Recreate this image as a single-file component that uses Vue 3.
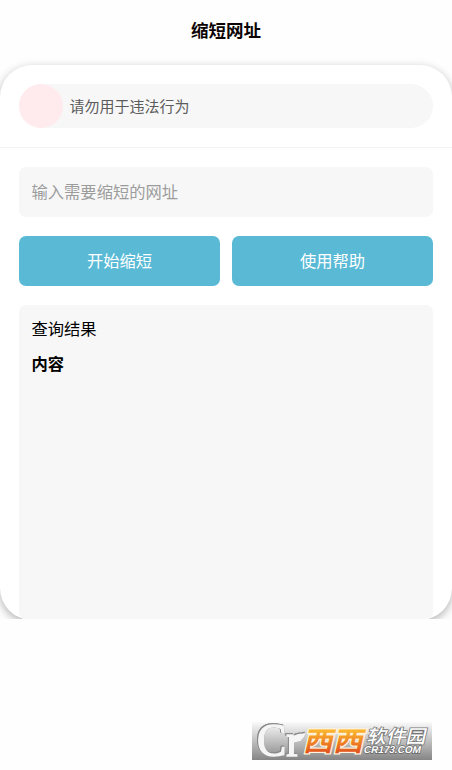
<script setup>
import { ref } from 'vue'

const url = ref('')
const actions = ['开始缩短', '使用帮助']
</script>

<template>
  <div class="page">
    <header class="title">缩短网址</header>

    <div class="stage">
      <main class="card">
        <section class="notice-wrap">
          <div class="notice">
            <span class="dot"></span>
            <span class="notice-text">请勿用于违法行为</span>
          </div>
        </section>
        <section class="content">
          <input v-model="url" class="field" type="text" placeholder="输入需要缩短的网址" />
          <div class="actions">
            <button v-for="a in actions" :key="a" class="btn" type="button">{{ a }}</button>
          </div>
          <div class="result">
            <div class="line">查询结果</div>
            <div class="line strong">内容</div>
          </div>
        </section>
      </main>
    </div>

    <footer class="foot">
      <svg class="logo" width="180" height="38" viewBox="0 0 180 38">
        <defs>
          <linearGradient id="bar" x1="0" y1="0" x2="0" y2="1">
            <stop offset="0" stop-color="#fafafa" />
            <stop offset="0.5" stop-color="#c0c0c0" />
            <stop offset="1" stop-color="#858585" />
          </linearGradient>
          <linearGradient id="orange" x1="0" y1="0" x2="0" y2="1">
            <stop offset="0.3" stop-color="#fbb42c" />
            <stop offset="0.85" stop-color="#e2521c" />
          </linearGradient>
        </defs>
        <rect width="180" height="38" fill="url(#bar)" />
        <g class="mark">
          <text x="5" y="33.5" font-size="46" textLength="44" lengthAdjust="spacingAndGlyphs">Cr</text>
          <path class="leaf" d="M39 19C39 12 46 13.500 53.500 11C52.500 17 46 21.500 40 20Z" />
        </g>
        <g transform="skewX(-13)">
          <text class="orange" x="57.500" y="28.800" font-size="27" textLength="60" lengthAdjust="spacingAndGlyphs">西西</text>
          <text class="soft" x="119" y="20.500" font-size="18.500" textLength="59" lengthAdjust="spacingAndGlyphs">软件园</text>
          <text class="domain" x="118.500" y="31.300" font-size="10" textLength="57" lengthAdjust="spacingAndGlyphs">CR173.COM</text>
        </g>
      </svg>
    </footer>
  </div>
</template>

<style>
body {
  margin: 0;
  background: #fff;
}
</style>

<style scoped>
.page {
  width: 100%;
  height: 770px;
  display: flex;
  flex-direction: column;
  overflow: hidden;
  background: #fefefe;
  font-family: "Noto Sans CJK SC", sans-serif;
  color: #000;
}
.title {
  height: 50px;
  padding-top: 5px;
  box-sizing: border-box;
  line-height: 50px;
  text-align: center;
  font-size: 17.5px;
  font-weight: 700;
  color: #0c0303;
}
.stage {
  height: 569px;
  padding-top: 15px;
  box-sizing: border-box;
  overflow: hidden;
}
.card {
  height: 555px;
  display: flex;
  flex-direction: column;
  overflow: hidden;
  border-radius: 32px;
  background: #fff;
  box-shadow: 0 3px 10px rgba(0, 0, 0, 0.3);
}
.notice-wrap {
  padding: 19px 19px;
  border-bottom: 1px solid #f4f4f4;
}
.notice {
  height: 44px;
  display: flex;
  align-items: center;
  gap: 6.5px;
  border-radius: 22px;
  background: #f7f7f7;
  font-size: 15px;
  color: #5c5c5c;
}
.notice-text {
  padding-bottom: 2px;
}
.dot {
  width: 44px;
  height: 44px;
  border-radius: 50%;
  background: #ffebee;
}
.content {
  flex: 1;
  display: flex;
  flex-direction: column;
  gap: 19px;
  padding: 19px 19px 0;
}
.field {
  height: 50px;
  box-sizing: border-box;
  padding: 0 12.5px 2px;
  border: 0;
  outline: 0;
  border-radius: 7px;
  background: #f7f7f7;
  font: inherit;
  font-size: 16.3px;
}
.field::placeholder {
  color: #9c9c9c;
  opacity: 1;
}
.actions {
  display: grid;
  grid-template-columns: 1fr 1fr;
  gap: 12px;
}
.btn {
  height: 50px;
  padding: 0 0 2px;
  border: 0;
  border-radius: 7px;
  background: #5abad6;
  color: #fff;
  font: inherit;
  font-size: 16.3px;
}
.result {
  flex: 1;
  padding: 6px 12.5px;
  border-radius: 7px;
  background: #f7f7f7;
  font-size: 16.3px;
}
.line {
  height: 35px;
  line-height: 35px;
}
.strong {
  font-weight: 700;
}
.foot {
  display: flex;
  justify-content: flex-end;
  margin-top: auto;
  padding: 0 20px 10px 0;
}
.logo {
  display: block;
  overflow: visible;
}
.mark {
  font-family: "Liberation Serif", serif;
  fill: #f5f5f5;
  stroke: #f5f5f5;
  stroke-width: 1.5;
  filter: drop-shadow(0.6px 0.6px 0.3px #777) drop-shadow(-0.6px -0.4px 0.3px #888);
}
.leaf {
  stroke-width: 0.5;
}
.orange {
  font-weight: 700;
  fill: url(#orange);
  stroke: #fff3dc;
  stroke-width: 2.5;
  paint-order: stroke;
}
.soft {
  font-weight: 500;
  fill: #fff;
  stroke: #777;
  stroke-width: 1.6;
  paint-order: stroke;
}
.domain {
  font-family: "Liberation Sans", sans-serif;
  font-weight: 700;
  fill: #fff;
  stroke: #666;
  stroke-width: 1.4;
  paint-order: stroke;
}
</style>
